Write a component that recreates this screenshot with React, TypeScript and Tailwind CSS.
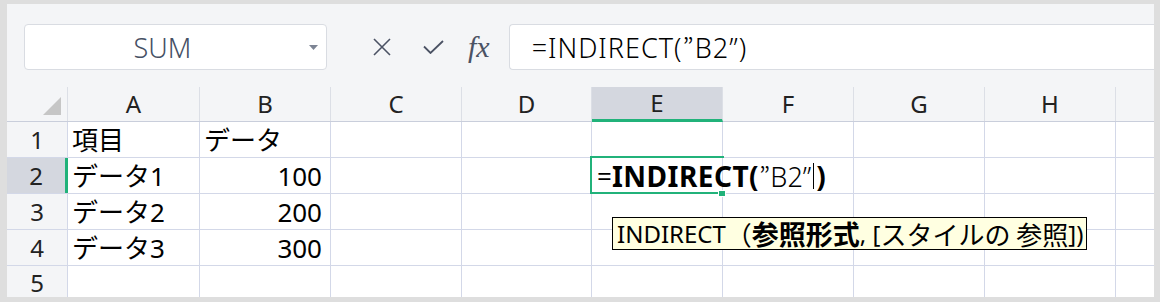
import React from "react";

const FONT = { fontFamily: '"Noto Sans", "Noto Sans CJK JP", sans-serif' };
const CJK = { fontFamily: '"Noto Sans CJK JP", sans-serif' };

const cols = [
  { k: "A", w: "w-[132px]" },
  { k: "B", w: "w-[131px]" },
  { k: "C", w: "w-[131px]" },
  { k: "D", w: "w-[130px]" },
  { k: "E", w: "w-[131px]" },
  { k: "F", w: "w-[131px]" },
  { k: "G", w: "w-[131px]" },
  { k: "H", w: "w-[131px]" },
  { k: "", w: "w-[40px]" },
];

const data: Record<number, string[]> = {
  1: ["項目", "データ"],
  2: ["データ1", "100"],
  3: ["データ2", "200"],
  4: ["データ3", "300"],
  5: ["", ""],
};

export default function App() {
  return (
    <div
      className="w-[1160px] h-[302px] bg-[#dedede] pt-[4px] pl-[7px] pr-[6px] pb-[5px]"
      style={FONT}
    >
      <div className="relative w-full h-full bg-[#f4f5f7] flex flex-col overflow-hidden">
        {/* toolbar */}
        <div className="h-[83px] shrink-0 flex items-start pt-[20px] pl-[17px]">
          <div className="w-[303px] h-[46px] bg-white border border-[#d9dce2] rounded-[4px] flex items-center relative">
            <span className="flex-1 text-center pr-[26px] text-[27px] font-light text-[#465064] leading-none">
              SUM
            </span>
            <svg className="absolute right-[8px] top-[20px]" width="9" height="5" viewBox="0 0 9 5">
              <path d="M0 0 L9 0 L4.5 5 Z" fill="#7d8494" />
            </svg>
          </div>
          <div className="flex items-center h-[46px] ml-[46px]">
            <svg width="18" height="18" viewBox="0 0 18 18">
              <path d="M1 1 L17 17 M17 1 L1 17" stroke="#4b5264" strokeWidth="1.6" />
            </svg>
            <svg className="ml-[32px]" width="21" height="14" viewBox="0 0 21 14">
              <path d="M1 6.5 L7.5 13 L20 1" stroke="#4b5264" strokeWidth="1.8" fill="none" />
            </svg>
            <span
              className="ml-[24px] text-[30px] italic text-[#4b5264] leading-none"
              style={{ fontFamily: '"Liberation Serif", "DejaVu Serif", serif' }}
            >
              fx
            </span>
          </div>
          <div className="ml-[19px] flex-1 h-[46px] bg-white border border-r-0 border-[#d9dce2] rounded-l-[4px] flex items-center pl-[22px]">
            <span className="text-[27px] tracking-[1px] text-black leading-none font-light whitespace-nowrap">
              =INDIRECT(<span style={CJK}>”</span>B2”)
            </span>
          </div>
        </div>

        {/* header row */}
        <div className="h-[35px] shrink-0 flex border-b border-[#c9cedb]">
          <div className="w-[61px] shrink-0 border-r border-[#dcdfe6] relative">
            <svg className="absolute left-[36px] top-[10px]" width="18" height="18" viewBox="0 0 18 18">
              <path d="M18 0 L18 18 L0 18 Z" fill="#c6c6c6" />
            </svg>
          </div>
          {cols.map((c) => (
            <div
              key={c.k || "x"}
              className={`${c.w} shrink-0 flex items-center justify-center text-[24px] text-[#222] leading-none ${
                c.k === "E"
                  ? "bg-[#d4d7df] border-b-[3px] border-b-[#21b27a] border-r border-r-[#dcdfe6] -mb-[1px]"
                  : "border-r border-[#dcdfe6]"
              }`}
            >
              {c.k}
            </div>
          ))}
        </div>

        {/* data rows */}
        {[1, 2, 3, 4, 5].map((r) => (
          <div
            key={r}
            className={`shrink-0 flex ${r === 5 ? "h-[31px]" : "h-[36px] border-b border-[#d3d8e8]"}`}
          >
            <div
              className={`w-[61px] shrink-0 flex items-center justify-center text-[24px] text-[#222] leading-none ${
                r === 2
                  ? "bg-[#d4d7df] border-r-[3px] border-r-[#21b27a]"
                  : "border-r border-[#d3d8e8]"
              } ${r === 5 ? "pt-[3px]" : ""}`}
            >
              {r}
            </div>
            {cols.map((c, i) => (
              <div
                key={c.k || "x"}
                className={`${c.w} shrink-0 bg-white border-r border-[#d3d8e8] flex items-center text-[26px] text-black leading-none whitespace-nowrap relative ${
                  i === 1 && r > 1 ? "justify-end pr-[8px]" : "pl-[4px]"
                } ${r === 2 && c.k === "E" ? "z-10" : ""}`}
              >
                {i < 2 ? data[r][i] : ""}
                {r === 2 && c.k === "E" && (
                  <>
                    <div className="absolute -left-[2px] -top-[2px] w-[134px] h-[38px] border-2 border-r-0 border-[#21b27a] pointer-events-none" />
                    <div className="absolute right-[-4px] bottom-[-4px] w-[8px] h-[7px] bg-[#21b27a] border border-white" />
                    <div className="absolute left-[5px] top-0 h-full flex items-center z-10 text-black leading-none">
                      <span className="text-[26px]">=</span>
                      <span className="text-[28px] font-bold tracking-[0.5px]">INDIRECT(</span>
                      <span className="text-[27px] font-light">
                        <span style={CJK}>”</span>B2”
                      </span>
                      <span className="inline-block w-[1px] h-[26px] bg-black mx-[2px]" />
                      <span className="text-[28px] font-bold">)</span>
                    </div>
                  </>
                )}
              </div>
            ))}
          </div>
        ))}

        {/* tooltip */}
        <div className="absolute left-[605px] top-[213px] h-[33px] bg-[#ffffe1] border border-black flex items-center pl-[4px] pr-[3px] text-[24px] leading-none text-black whitespace-nowrap z-20">
          <span>INDIRECT</span>
          <span className="text-[26px]" style={CJK}>（</span>
          <span className="font-bold text-[27px]" style={CJK}>参照形式</span>
          <span>, [</span>
          <span className="text-[26px]" style={CJK}>スタイルの 参照</span>
          <span>])</span>
        </div>
      </div>
    </div>
  );
}
